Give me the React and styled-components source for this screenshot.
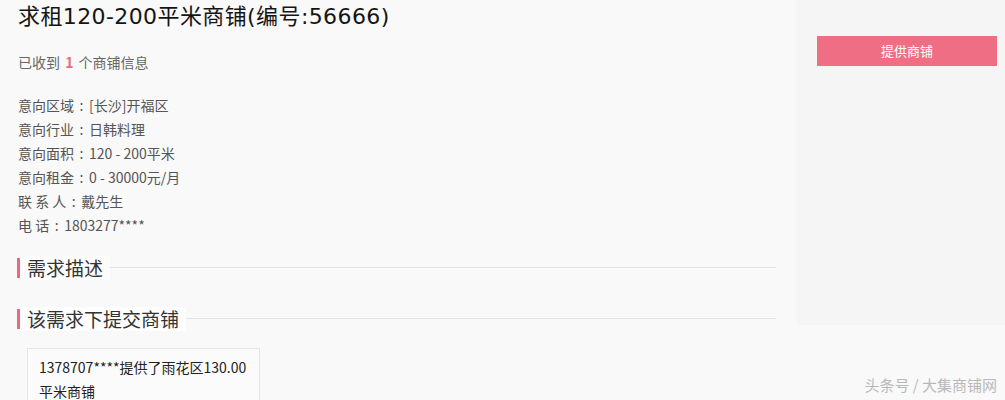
import styled, { createGlobalStyle } from "styled-components";

const GlobalStyle = createGlobalStyle`
    html, body {
        margin: 0;
        padding: 0;
        background: #f9f9f9;
        font-family: "Noto Sans CJK SC", "Noto Sans", sans-serif;
    }
`;

const info = [
    { label: "意向区域", value: "[长沙]开福区" },
    { label: "意向行业", value: "日韩料理" },
    { label: "意向面积", value: "120 - 200平米" },
    { label: "意向租金", value: "0 - 30000元/月" },
    { label: "联 系 人", value: "戴先生" },
    { label: "电 话", value: "1803277****" },
];

const App = () => {
    return (
        <>
            <GlobalStyle />
            <Page>
                <Main>
                    <Title>求租120-200平米商铺(编号:56666)</Title>
                    <Received>
                        已收到 <Count>1</Count> 个商铺信息
                    </Received>

                    <InfoList>
                        {info.map((item) => (
                            <InfoRow key={item.label}>
                                {item.label}<Colon>:</Colon>{item.value}
                            </InfoRow>
                        ))}
                    </InfoList>

                    <Heading $top={19}>
                        <HeadingText>需求描述</HeadingText>
                    </Heading>

                    <Heading $top={27}>
                        <HeadingText>该需求下提交商铺</HeadingText>
                    </Heading>

                    <Card>1378707****提供了雨花区130.00平米商铺</Card>
                </Main>

                <Sidebar>
                    <OfferButton>提供商铺</OfferButton>
                </Sidebar>

                <Watermark>头条号 / 大集商铺网</Watermark>
            </Page>
        </>
    );
};

export default App;

const Page = styled.div`
    position: relative;
    width: 1005px;
    height: 400px;
    overflow: hidden;
    display: flex;
    align-items: flex-start;
`;

const Main = styled.div`
    width: 759px;
    padding-left: 17px;
    display: flex;
    flex-direction: column;
    align-items: flex-start;
`;

const Title = styled.h1`
    margin: 0;
    font-family: "DejaVu Sans", "Noto Sans CJK SC", sans-serif;
    font-size: 22px;
    font-weight: 400;
    letter-spacing: 0.4px;
    line-height: 34px;
    color: #151515;
    padding-left: 1px;
`;

const Received = styled.div`
    margin-top: 16px;
    font-size: 14px;
    line-height: 24px;
    color: #666;
    padding-left: 1px;
`;

const Count = styled.span`
    color: #e86b80;
    font-weight: 700;
    margin: 0 2px;
`;

const InfoList = styled.div`
    margin-top: 19px;
    display: flex;
    flex-direction: column;
`;

const InfoRow = styled.div`
    font-size: 14px;
    line-height: 24px;
    color: #555;
    padding-left: 1px;
`;

const Colon = styled.span`
    display: inline-block;
    width: 15px;
    text-align: center;
`;

const Heading = styled.div`
    margin-top: ${props => props.$top}px;
    width: 100%;
    height: 24px;
    display: flex;
    align-items: center;

    &::before {
        content: "";
        width: 3px;
        height: 20px;
        background: #e8687e;
    }

    &::after {
        content: "";
        flex: 1;
        height: 1px;
        margin-top: -2px;
        background: #e2e2e2;
    }
`;

const HeadingText = styled.span`
    font-size: 19px;
    line-height: 24px;
    color: #333;
    background: #fdfdfd;
    padding: 0 7px 0 7px;
`;

const Card = styled.div`
    margin-top: 17px;
    margin-left: 10px;
    width: 209px;
    padding: 6px 11px;
    border: 1px solid #e6e6e6;
    background: #fbfbfb;
    font-size: 14px;
    line-height: 24px;
    color: #222;
    word-break: break-all;
`;

const Sidebar = styled.div`
    box-sizing: border-box;
    margin-left: 21px;
    width: 208px;
    height: 325px;
    padding: 36px 8px 0 20px;
    background: #f5f5f5;
`;

const OfferButton = styled.div`
    width: 180px;
    height: 30px;
    background: #f06e83;
    color: #fff;
    font-size: 13px;
    line-height: 30px;
    text-align: center;
    cursor: pointer;
`;

const Watermark = styled.div`
    position: absolute;
    right: 8px;
    bottom: 5px;
    font-size: 15px;
    color: #b8b8b8;
    text-shadow: 0 0 1px rgba(255, 255, 255, 0.9);
`;
